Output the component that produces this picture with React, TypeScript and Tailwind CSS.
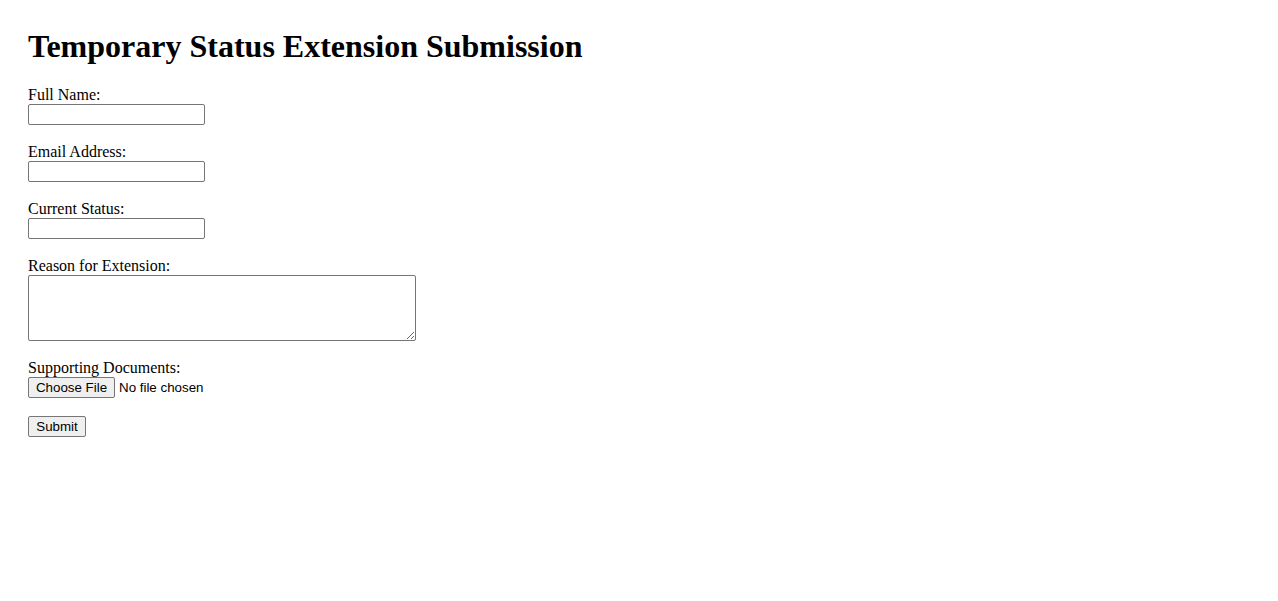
export default function App() {
  return (
    <main className="min-h-screen bg-white px-[28px] pt-[28px] font-['Liberation_Serif',serif] text-[16px] text-black">
      {/* Heading */}
      <h1 className="mb-[21px] text-[32px] font-bold leading-[37px]">
        Temporary Status Extension Submission
      </h1>

      <form className="flex flex-col items-start">
        <div className="mb-[18px] flex flex-col items-start">
          <label htmlFor="name" className="leading-[18px]">
            Full Name:
          </label>
          <input
            id="name"
            type="text"
            className="h-[21px] w-[177px] rounded-[2px] border border-[#767676] px-[2px] font-['Liberation_Sans',sans-serif] text-[13.33px]"
          />
        </div>

        <div className="mb-[18px] flex flex-col items-start">
          <label htmlFor="email" className="leading-[18px]">
            Email Address:
          </label>
          <input
            id="email"
            type="email"
            className="h-[21px] w-[177px] rounded-[2px] border border-[#767676] px-[2px] font-['Liberation_Sans',sans-serif] text-[13.33px]"
          />
        </div>

        <div className="mb-[18px] flex flex-col items-start">
          <label htmlFor="status" className="leading-[18px]">
            Current Status:
          </label>
          <input
            id="status"
            type="text"
            className="h-[21px] w-[177px] rounded-[2px] border border-[#767676] px-[2px] font-['Liberation_Sans',sans-serif] text-[13.33px]"
          />
        </div>

        <div className="mb-[18px] flex flex-col items-start">
          <label htmlFor="reason" className="leading-[18px]">
            Reason for Extension:
          </label>
          <textarea
            id="reason"
            className="h-[66px] w-[388px] rounded-[2px] border border-[#767676] px-[2px] font-['Liberation_Mono',monospace] text-[13.33px]"
          />
        </div>

        <div className="mb-[18px] flex flex-col items-start">
          <span className="leading-[18px]">Supporting Documents:</span>
          <div className="flex items-center gap-[4px] font-['Liberation_Sans',sans-serif] text-[13.33px]">
            <button
              type="button"
              className="h-[21px] w-[87px] rounded-[2px] border border-[#767676] bg-[#efefef] leading-[19px]"
            >
              Choose File
            </button>
            <span>No file chosen</span>
          </div>
        </div>

        <button
          type="submit"
          className="h-[21px] w-[58px] rounded-[2px] border border-[#767676] bg-[#efefef] font-['Liberation_Sans',sans-serif] text-[13.33px] leading-[19px]"
        >
          Submit
        </button>
      </form>
    </main>
  );
}
